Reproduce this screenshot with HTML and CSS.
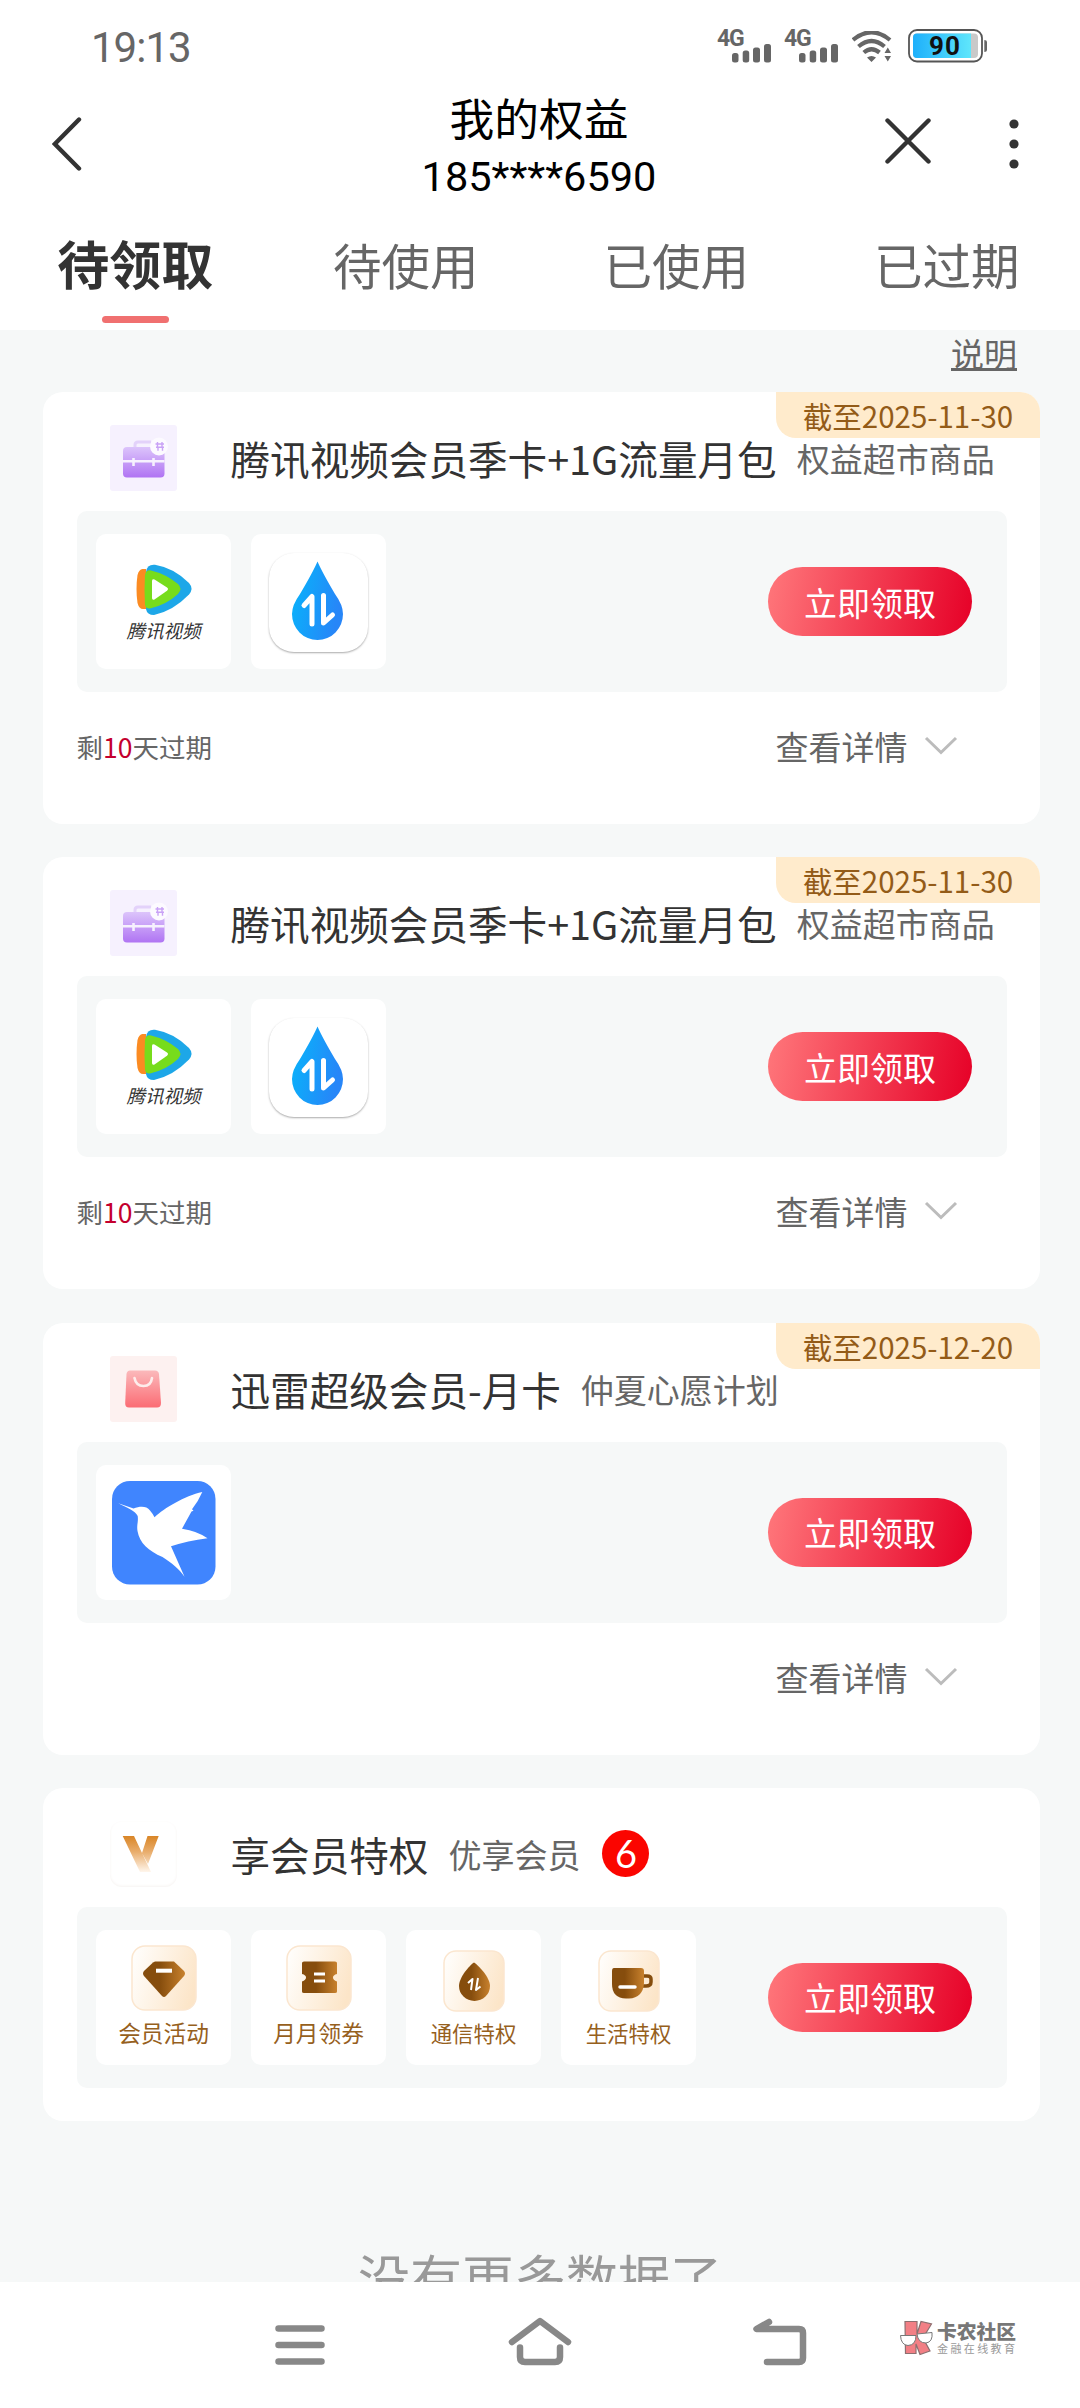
FILE: index.html
```html
<!DOCTYPE html>
<html lang="zh-CN">
<head>
<meta charset="utf-8">
<title>我的权益</title>
<link rel="stylesheet" href="styles.css">
</head>
<body>
<svg class="defs" aria-hidden="true">
  <defs>
    <linearGradient id="purple" x1="0" y1="0" x2="0" y2="1"><stop offset="0" stop-color="#dcc4fb"/><stop offset="1" stop-color="#b074f3"/></linearGradient>
    <linearGradient id="rose" x1="0" y1="0" x2="0" y2="1"><stop offset="0" stop-color="#fbb9bb"/><stop offset="1" stop-color="#fb6c74"/></linearGradient>
    <linearGradient id="gold" x1="0" y1="0" x2="0" y2="1"><stop offset="0" stop-color="#d98526"/><stop offset=".45" stop-color="#e9ae6e"/><stop offset="1" stop-color="#fff6ec"/></linearGradient>
    <linearGradient id="water" x1="0" y1="0" x2="1" y2="0.3"><stop offset="0" stop-color="#06b6fb"/><stop offset="1" stop-color="#2786f8"/></linearGradient>
    <linearGradient id="bronze" x1="0" y1="0" x2="1" y2="0"><stop offset="0" stop-color="#854d0d"/><stop offset=".4" stop-color="#864d0d"/><stop offset="1" stop-color="#c8812d"/></linearGradient>
    <linearGradient id="cream" x1="0" y1="0.3" x2="1" y2="0.6"><stop offset="0" stop-color="#fffdfa"/><stop offset="1" stop-color="#fce5c8"/></linearGradient>
    <linearGradient id="power" x1="0" y1="0" x2="1" y2="0"><stop offset="0" stop-color="#1eb0fb"/><stop offset="1" stop-color="#5fe6fc"/></linearGradient>
    <symbol id="case" viewBox="0 0 67 66">
      <path d="M25 23v-3q0-3 3-3h13" fill="none" stroke="#e3d2fa" stroke-width="3"/>
      <rect x="13" y="22" width="41.5" height="30.5" rx="4" fill="url(#purple)"/>
      <path d="M13 36.3h41.5M23.5 33v8M43.5 33v8" stroke="#f6f1fe" stroke-width="2.6"/>
      <circle cx="49" cy="21.5" r="9" fill="#fcfaff"/>
      <path d="M45.500 19h8.500M47.500 17v4.500M52 17v4.500M46 22.300h8M48 22.300v3.500M52.500 22.300v3.500" stroke="#c9a2f6" stroke-width="1.400"/>
    </symbol>
    <symbol id="tencent" viewBox="0 0 135 86">
      <path d="M50 38Q51 30 59 30.800Q78 34 93 49Q98 54.700 93 60.500Q77 77 58 81Q51 81 50 75Z" fill="#1da7e8"/>
      <path d="M50 35H46.500Q43 35.500 41.500 41Q39.500 55 41.500 69Q43 75 47 75H50Z" fill="#fb8b22"/>
      <path d="M49 41Q50 35.500 55 36.500Q70 40 82 50Q87 54.700 82 60Q70 71 54 74.500Q50 75 49 71Q48 56 49 41Z" fill="#77dc1b"/>
      <path d="M56 46.500Q56.500 44.500 58.500 45.500L71 53.500Q73 55 71 56.700L58.500 65.500Q56 66.500 56 64Z" fill="#fff"/>
    </symbol>
    <symbol id="chev" viewBox="0 0 36 22"><path d="M3 3L18 17.500L33 3" fill="none" stroke="#bcbcbc" stroke-width="3"/></symbol>
    <symbol id="signal" viewBox="0 0 40 19">
      <rect x="0" y="9" width="6.500" height="9.500" rx="2.500"/><rect x="10.700" y="6.500" width="6.500" height="12" rx="2.500"/><rect x="21" y="3.500" width="7" height="15" rx="2.500"/><rect x="32" y="0" width="7" height="18.500" rx="2.500"/>
    </symbol>
  </defs>
</svg>

<div class="screen">
  <header class="head">
    <div class="status">
      <span class="clock">19:13</span>
      <div class="net"><b>4G</b><svg class="sig"><use href="#signal"/></svg></div>
      <div class="net"><b>4G</b><svg class="sig"><use href="#signal"/></svg></div>
      <svg class="wifi" viewBox="0 0 40 31">
        <path d="M1 9Q19.500-6.500 38 9M6.500 15.500Q19.500 4.500 32.500 15.500M11.800 21.500Q19.500 15 27.500 21.500" fill="none" stroke="#666" stroke-width="4.200"/>
        <path d="M15 26.500Q19.500 23.500 24 26.500L19.500 31ZM32.500 22L35.800 16.500L39 22ZM32.500 25L35.800 30.500L39 25Z" fill="#666"/>
      </svg>
      <div class="battery"><svg viewBox="0 0 80 34">
        <rect x="1" y="1" width="73" height="31.500" rx="8" fill="#fff" stroke="#555" stroke-width="1.800"/>
        <rect x="5" y="4.500" width="65" height="24.500" rx="4" fill="#c9c9c9"/>
        <path d="M9 4.500H63V29H9Q5 29 5 25V8.500Q5 4.500 9 4.500Z" fill="url(#power)"/>
        <path d="M76.300 11Q79 11 79 13V21Q79 23 76.300 23Z" fill="#666"/>
      </svg><b>90</b></div>
    </div>
    <div class="titlebar">
      <svg class="back" viewBox="0 0 30 54"><path d="M27 2.500L2.800 27L27 51.500" /></svg>
      <div class="heading"><h1>我的权益</h1><p>185****6590</p></div>
      <div class="tools">
        <svg class="close" viewBox="0 0 46 46"><path d="M2.500 2.500L43.500 43.500M43.500 2.500L2.500 43.500"/></svg>
        <svg class="dots" viewBox="0 0 10 50"><circle cx="5" cy="5" r="4.600"/><circle cx="5" cy="25" r="4.600"/><circle cx="5" cy="45" r="4.600"/></svg>
      </div>
    </div>
    <nav class="tabs">
      <div class="tab on">待领取</div><div class="tab">待使用</div><div class="tab">已使用</div><div class="tab">已过期</div>
    </nav>
  </header>

  <main class="body">
    <div class="hint"><a>说明</a></div>
    <div class="cards">
      <section class="card">
        <div class="ribbon">截至2025-11-30</div>
        <div class="top"><svg class="kind violet"><use href="#case"/></svg><h2>腾讯视频会员季卡+1G流量月包</h2><span>权益超市商品</span></div>
        <div class="panel">
          <div class="tile"><svg class="ten"><use href="#tencent"/></svg><i class="brand">腾讯视频</i></div>
          <div class="tile"><div class="appbox"><svg viewBox="0 0 98 99"><path d="M48.500 8.500Q53 19 66 41Q74 52 74 61A25.500 26 0 0 1 23 61Q23 52 31 41Q44 19 48.500 8.500Z" fill="url(#water)"/><path d="M35 52.500L43 43.500V71M54.500 42.500V70L63.500 62" fill="none" stroke="#fff" stroke-width="5" stroke-linecap="round" stroke-linejoin="round"/></svg></div></div>
          <button>立即领取</button>
        </div>
        <div class="foot"><span>剩<em>10</em>天过期</span><a>查看详情<svg class="chev"><use href="#chev"/></svg></a></div>
      </section>

      <section class="card">
        <div class="ribbon">截至2025-11-30</div>
        <div class="top"><svg class="kind violet"><use href="#case"/></svg><h2>腾讯视频会员季卡+1G流量月包</h2><span>权益超市商品</span></div>
        <div class="panel">
          <div class="tile"><svg class="ten"><use href="#tencent"/></svg><i class="brand">腾讯视频</i></div>
          <div class="tile"><div class="appbox"><svg viewBox="0 0 98 99"><path d="M48.500 8.500Q53 19 66 41Q74 52 74 61A25.500 26 0 0 1 23 61Q23 52 31 41Q44 19 48.500 8.500Z" fill="url(#water)"/><path d="M35 52.500L43 43.500V71M54.500 42.500V70L63.500 62" fill="none" stroke="#fff" stroke-width="5" stroke-linecap="round" stroke-linejoin="round"/></svg></div></div>
          <button>立即领取</button>
        </div>
        <div class="foot"><span>剩<em>10</em>天过期</span><a>查看详情<svg class="chev"><use href="#chev"/></svg></a></div>
      </section>

      <section class="card">
        <div class="ribbon">截至2025-12-20</div>
        <div class="top"><svg class="kind pink" viewBox="0 0 67 66"><path d="M20 14.500H45Q48.500 14.500 49 18L51 47Q51 51.500 47 51.500H19Q15 51.500 15.200 47L16.500 18Q17 14.500 20 14.500Z" fill="url(#rose)"/><path d="M24.500 22Q26 30 33.500 30T42 22" fill="none" stroke="#fdeceb" stroke-width="2.600" stroke-linecap="round"/></svg><h2>迅雷超级会员-月卡</h2><span>仲夏心愿计划</span></div>
        <div class="panel">
          <div class="tile"><svg class="bird" viewBox="15.500 16 104 104"><rect x="15.500" y="16" width="103.500" height="103.500" rx="18" fill="#4085fe"/><path d="M21.800 38.300L37 43.500C44 41 50 41 53.500 45.500Q56.500 49 58 52.300C68 43 88 31 105.800 27Q102 36 95.500 44.300L97 45.700L95 46.500L85.500 63.700Q101 66 111 73.300Q91 76 74.500 81.300L88 111.700C83 104 75 98 66 92C52 86 43 78 41 66C40 60 42 57 41.200 51C39 46 31 43 21.800 38.300Z" fill="#fff"/></svg></div>
          <button>立即领取</button>
        </div>
        <div class="foot"><span></span><a>查看详情<svg class="chev"><use href="#chev"/></svg></a></div>
      </section>

      <section class="card short">
        <div class="top"><svg class="kind vip" viewBox="0 0 67 66"><path d="M12.700 15H24L41 51H30ZM37.500 15H48.700L38 43L32 32Z" fill="url(#gold)"/></svg><h2>享会员特权</h2><span>优享会员</span><b class="count">6</b></div>
        <div class="panel">
          <div class="tile perk"><svg viewBox="0 0 66 66"><rect class="plate" x="1" y="1" width="64" height="64" rx="13"/><path d="M24 16.500H43L53 26Q55 28.500 53 31L35 51Q33 53 31 51L13 31Q11 28.500 13 26L22 17.500Z" fill="url(#bronze)"/><path d="M25 25.700H41" stroke="#fff" stroke-width="4"/></svg><span>会员活动</span></div>
          <div class="tile perk"><svg viewBox="0 0 66 66"><rect class="plate" x="1" y="1" width="64" height="64" rx="13"/><path d="M16 18Q16 16.500 18 16.500H49Q51 16.500 51 18V29Q47 30 47 32.500T51 36.500V46.500Q51 48 49 48H18Q16 48 16 46.500V36.500Q20 35 20 32.500T16 29Z" fill="url(#bronze)"/><path d="M28 29H39M28 36H39" stroke="#fff" stroke-width="3"/></svg><span>月月领券</span></div>
          <div class="tile perk small"><svg viewBox="0 0 62 62"><rect class="plate" x="1" y="1" width="60" height="60" rx="12"/><path d="M31 12.500C35 15 47 27 47 36A15.500 15 0 0 1 16 36C16 27 27 15 31 12.500Z" fill="url(#bronze)"/><path d="M25 33L29.500 29L28 40M35 28L33 40L37.500 36.500" fill="none" stroke="#fff" stroke-width="2" stroke-linejoin="round"/></svg><span>通信特权</span></div>
          <div class="tile perk small"><svg viewBox="0 0 62 62"><rect class="plate" x="1" y="1" width="60" height="60" rx="12"/><path d="M45 26H49Q53 26 53 29V32Q53 36 48 36H44" fill="none" stroke="#854d0d" stroke-width="3.500"/><path d="M16 18H43Q46 18 46 21V33Q45 48 31 48.500H28Q14 48 14 34V21Q14 18 16 18Z" fill="url(#bronze)"/><path d="M22 37H37" stroke="#fff" stroke-width="3.500" stroke-linecap="round"/></svg><span>生活特权</span></div>
          <button>立即领取</button>
        </div>
      </section>
    </div>
    <p class="end">没有更多数据了</p>
  </main>

  <footer class="sysnav">
    <svg class="menu" viewBox="0 0 50 42"><path d="M3.500 4.500H46.500M3.500 21H46.500M3.500 37.500H46.500"/></svg>
    <svg class="home" viewBox="0 0 64 50"><path d="M4 26L32 5L60 26M12 31.500V41Q12 46 17 46H47Q52 46 52 41V31.500"/></svg>
    <svg class="ret" viewBox="0 0 54 48"><path d="M16 4L3.500 11H46Q50 11 50 15V40Q50 44 46 44H14"/></svg>
    <div class="mark">
      <svg viewBox="0 0 36 36"><path d="M6 1.500H18V14L22 1.500L32.500 4L24 18L31 31L21 34.500L17 24V33.500H6.500Z" fill="#f27f85" stroke="#8d6f70" stroke-width="1.200"/><path d="M1.500 15.500H17Q17 25 9 25.500Q2 25 1.500 15.500ZM18 14L33 12.500Q34 22 27 23Q19 23 18 14Z" fill="#fff" stroke="#777"/></svg>
      <div><strong>卡农社区</strong><small>金融在线教育</small></div>
    </div>
  </footer>
</div>
</body>
</html>
```

FILE: styles.css
```css
* { box-sizing: border-box; margin: 0; padding: 0; }
body { width: 1080px; background: #f6f8f8; font-family: "Noto Sans CJK SC", "Noto Sans", sans-serif; color: #333; }
svg { display: block; flex: none; }
.defs { position: absolute; width: 0; height: 0; }
.screen { display: flex; flex-direction: column; height: 2408px; overflow: hidden; }
h1, h2 { font-weight: 400; }
em { font-style: normal; }

.head { flex: none; height: 330px; background: #fff; }
.status { display: flex; height: 92px; padding: 29px 92px 0 91px; color: #666; }
.clock { flex: 1; font: 42px/38px Roboto, sans-serif; letter-spacing: -1px; }
.net { display: flex; width: 67px; }
.net b { width: 15px; font: 700 23px/19px Roboto, sans-serif; letter-spacing: -1.200px; }
.sig { width: 40px; height: 19px; margin-top: 15px; fill: #666; }
.wifi { width: 40px; height: 31px; margin: 2px 16px 0 1px; }
.battery { position: relative; width: 80px; height: 34px; }
.battery b { position: absolute; inset: 0 6px 0 0; text-align: center; color: #111; font: 700 26px/34px Roboto, sans-serif; letter-spacing: 1px; }

.titlebar { display: grid; grid-template-columns: 1fr 260px 1fr; height: 126px; padding: 0 61px 0 52px; }
.titlebar path { fill: none; stroke: #333; stroke-width: 4.400; stroke-linecap: round; }
.back { width: 30px; height: 54px; margin-top: 25px; }
.heading { margin-left: 7px; text-align: center; color: #000; }
.heading h1 { font-size: 44.700px; line-height: 50px; }
.heading p { font: 41.500px/50px Roboto, sans-serif; margin-top: 10px; }
.tools { display: flex; justify-content: flex-end; gap: 78px; }
.close { width: 46px; height: 46px; margin-top: 26px; }
.dots { width: 10px; height: 50px; margin-top: 27px; fill: #333; }

.tabs { display: grid; grid-template-columns: repeat(4, 270.500px); height: 112px; }
.tab { text-align: center; font-size: 48.500px; line-height: 92px; color: #666; }
.tab.on { font-size: 52px; font-weight: 700; line-height: 90px; color: #333; }
.tab.on::after { content: ""; display: block; width: 67px; height: 7px; margin: 8px auto 0; border-radius: 4px; background: #f07070; }

.body { flex: none; height: 1952px; overflow: hidden; background: #f6f8f8; }
.hint { height: 62px; padding: 0 63px; text-align: right; color: #666; font-size: 33px; line-height: 46px; }
.hint a { display: inline-block; height: 41px; border-bottom: 3px solid #666; }

.cards { display: flex; flex-direction: column; gap: 33.300px; padding: 0 40px 0 43px; }
.card { position: relative; height: 432px; padding: 33px 33.500px 0; border-radius: 20px; background: #fff; }
.card.short { height: 333px; }
.ribbon { position: absolute; top: 0; right: 0; width: 264px; height: 46px; text-align: center; color: #935b18; background: #ffebcc; border-radius: 0 20px 0 20px; font-size: 29.500px; line-height: 46px; white-space: nowrap; }
.top { display: flex; align-items: center; height: 66px; padding-left: 33.500px; white-space: nowrap; }
.kind { width: 67px; height: 66px; margin-right: 53.500px; }
.violet { background: #f6f1fe; border-radius: 3px; }
.pink { background: #fdf1f0; border-radius: 3px; }
.vip { border-radius: 12px; box-shadow: inset 0 -1px 3px #f6f3f1; }
.top h2 { font-size: 39.600px; line-height: 66px; }
.top span { margin-left: 20px; font-size: 33px; line-height: 66px; color: #666; }
.count { width: 47px; height: 47px; margin: -1px 0 0 22px; border-radius: 50%; background: #fb0500; color: #fff; text-align: center; font: 400 38px/46px Lato, sans-serif; }

.panel { display: flex; align-items: center; gap: 20px; height: 181px; margin-top: 20px; padding: 0 34.500px 0 19.500px; border-radius: 10px; background: #f6f8f8; }
.tile { display: flex; flex-direction: column; align-items: center; width: 135px; height: 135px; border-radius: 10px; background: #fff; }
.ten { width: 135px; height: 86px; }
.brand { margin-top: -1px; font-size: 18.500px; line-height: 22px; color: #333; }
.appbox { width: 99px; height: 99px; margin-top: 19px; border-radius: 25px; box-shadow: 0 1px 2px #aaa; }
.appbox svg { width: 98px; height: 99px; }
.bird { width: 104px; height: 104px; margin-top: 16px; }
.perk { color: #96601d; font-size: 22.700px; }
.perk svg { width: 66px; height: 66px; margin-top: 15px; }
.perk span { line-height: 28px; margin-top: 8px; }
.perk.small { font-size: 21.400px; }
.perk.small svg { width: 62px; height: 62px; margin-top: 20px; }
.perk.small span { margin-top: 7px; }
.plate { fill: url(#cream); stroke: #fbe6cf; stroke-width: 1.500; }
button { width: 204px; height: 69px; margin-left: auto; border: 0; border-radius: 35px; color: #fff; background: linear-gradient(100deg, #ff777b, #e60027); font: 33px/66px "Noto Sans CJK SC", sans-serif; }

.foot { display: flex; justify-content: space-between; align-items: center; height: 108px; padding-right: 48px; color: #666; font-size: 26.500px; }
.foot em { color: #c4002e; }
.foot a { display: flex; align-items: center; font-size: 33px; }
.chev { width: 36px; height: 22px; margin-left: 15px; }

.end { margin-top: 114px; text-align: center; color: #999; font-size: 52px; line-height: 84px; }

.sysnav { display: grid; flex: none; grid-template-columns: 233px 245px 146px 120px; height: 126px; padding-left: 275px; background: #fff; }
.sysnav > svg > path { fill: none; stroke: #888; stroke-width: 6.500; stroke-linecap: round; stroke-linejoin: round; }
.menu { width: 50px; height: 42px; margin-top: 42px; }
.home { width: 64px; height: 50px; margin-top: 34px; }
.ret { width: 54px; height: 48px; margin-top: 36px; }
.mark { display: flex; margin-top: 38px; gap: 2px; }
.mark > svg { width: 36px; height: 36px; }
.mark strong { display: block; font-size: 19.800px; font-weight: 900; line-height: 21px; color: #777; }
.mark small { display: block; font-size: 11px; letter-spacing: 2.400px; line-height: 14px; color: #999; white-space: nowrap; }
```
